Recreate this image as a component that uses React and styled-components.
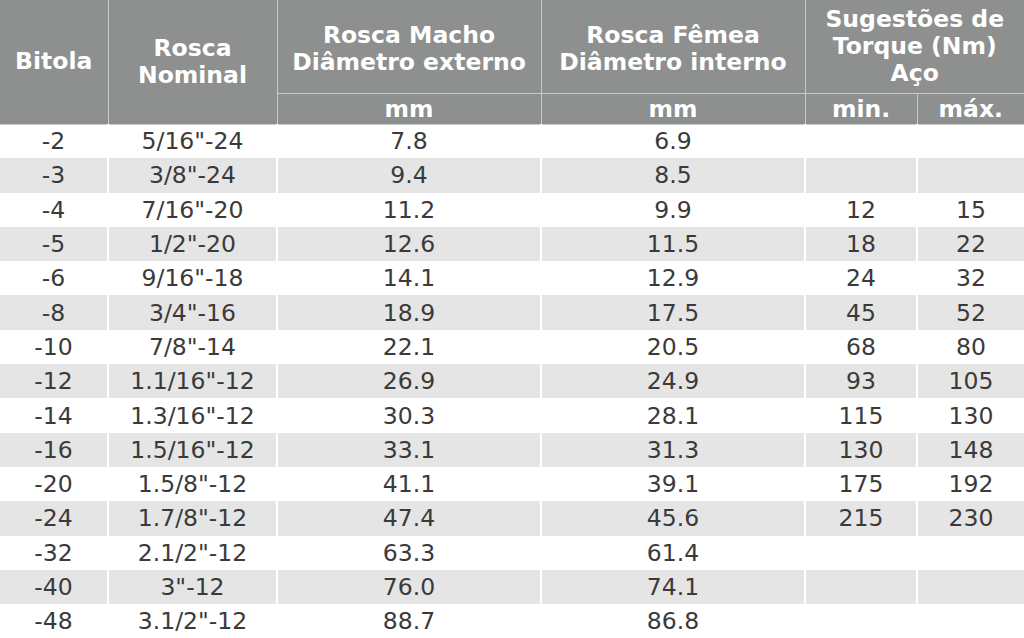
import styled, { createGlobalStyle } from 'styled-components'

const GlobalStyle = createGlobalStyle`
  html, body {
    margin: 0;
    padding: 0;
    background: #ffffff;
  }
`

const rows = [
  ['-2', '5/16"-24', '7.8', '6.9', '', ''],
  ['-3', '3/8"-24', '9.4', '8.5', '', ''],
  ['-4', '7/16"-20', '11.2', '9.9', '12', '15'],
  ['-5', '1/2"-20', '12.6', '11.5', '18', '22'],
  ['-6', '9/16"-18', '14.1', '12.9', '24', '32'],
  ['-8', '3/4"-16', '18.9', '17.5', '45', '52'],
  ['-10', '7/8"-14', '22.1', '20.5', '68', '80'],
  ['-12', '1.1/16"-12', '26.9', '24.9', '93', '105'],
  ['-14', '1.3/16"-12', '30.3', '28.1', '115', '130'],
  ['-16', '1.5/16"-12', '33.1', '31.3', '130', '148'],
  ['-20', '1.5/8"-12', '41.1', '39.1', '175', '192'],
  ['-24', '1.7/8"-12', '47.4', '45.6', '215', '230'],
  ['-32', '2.1/2"-12', '63.3', '61.4', '', ''],
  ['-40', '3"-12', '76.0', '74.1', '', ''],
  ['-48', '3.1/2"-12', '88.7', '86.8', '', ''],
]

const widths = [108, 169, 264, 264, 112, 107]

const Table = styled.table`
  width: 1024px;
  table-layout: fixed;
  border-collapse: collapse;
  font-family: 'DejaVu Sans', 'Liberation Sans', sans-serif;
`

const HeadCell = styled.th`
  box-sizing: border-box;
  background: #8e8f8f;
  color: #ffffff;
  font-weight: bold;
  font-size: 23.5px;
  line-height: 27px;
  text-align: center;
  vertical-align: middle;
  padding: ${(p) => p.$pt || 0}px 0 0;
  border: 1px solid #c9caca;
  border-top: none;
  height: ${(p) => p.$h}px;
  white-space: nowrap;
  &:first-child {
    border-left: none;
  }
  &:last-child {
    border-right: none;
  }
`

const UnitCell = styled(HeadCell)`
  line-height: 28px;
`

const Row = styled.tr`
  height: 34.3px;
  background: ${(p) => (p.$striped ? '#e5e5e5' : '#ffffff')};
`

const Cell = styled.td`
  box-sizing: border-box;
  padding: 0;
  text-align: center;
  vertical-align: middle;
  font-size: 23.5px;
  color: #3a3a3a;
  border-left: 2px solid #ffffff;
  white-space: nowrap;
  &:first-child {
    border-left: none;
  }
`

export default function App() {
  return (
    <>
      <GlobalStyle />
      <Table>
        <colgroup>
          {widths.map((w, i) => (
            <col key={i} style={{ width: w }} />
          ))}
        </colgroup>
        <thead>
          <tr>
            <HeadCell rowSpan={2} $h={93}>Bitola</HeadCell>
            <HeadCell rowSpan={2} $h={93}>
              Rosca
              <br />
              Nominal
            </HeadCell>
            <HeadCell $h={93} $pt={5}>
              Rosca Macho
              <br />
              Diâmetro externo
            </HeadCell>
            <HeadCell $h={93} $pt={5}>
              Rosca Fêmea
              <br />
              Diâmetro interno
            </HeadCell>
            <HeadCell colSpan={2} $h={93}>
              Sugestões de
              <br />
              Torque (Nm)
              <br />
              Aço
            </HeadCell>
          </tr>
          <tr>
            <UnitCell $h={31}>mm</UnitCell>
            <UnitCell $h={31}>mm</UnitCell>
            <UnitCell $h={31}>min.</UnitCell>
            <UnitCell $h={31}>máx.</UnitCell>
          </tr>
        </thead>
        <tbody>
          {rows.map((r, i) => (
            <Row key={r[0]} $striped={i % 2 === 1}>
              {r.map((v, j) => (
                <Cell key={j}>{v}</Cell>
              ))}
            </Row>
          ))}
        </tbody>
      </Table>
    </>
  )
}
